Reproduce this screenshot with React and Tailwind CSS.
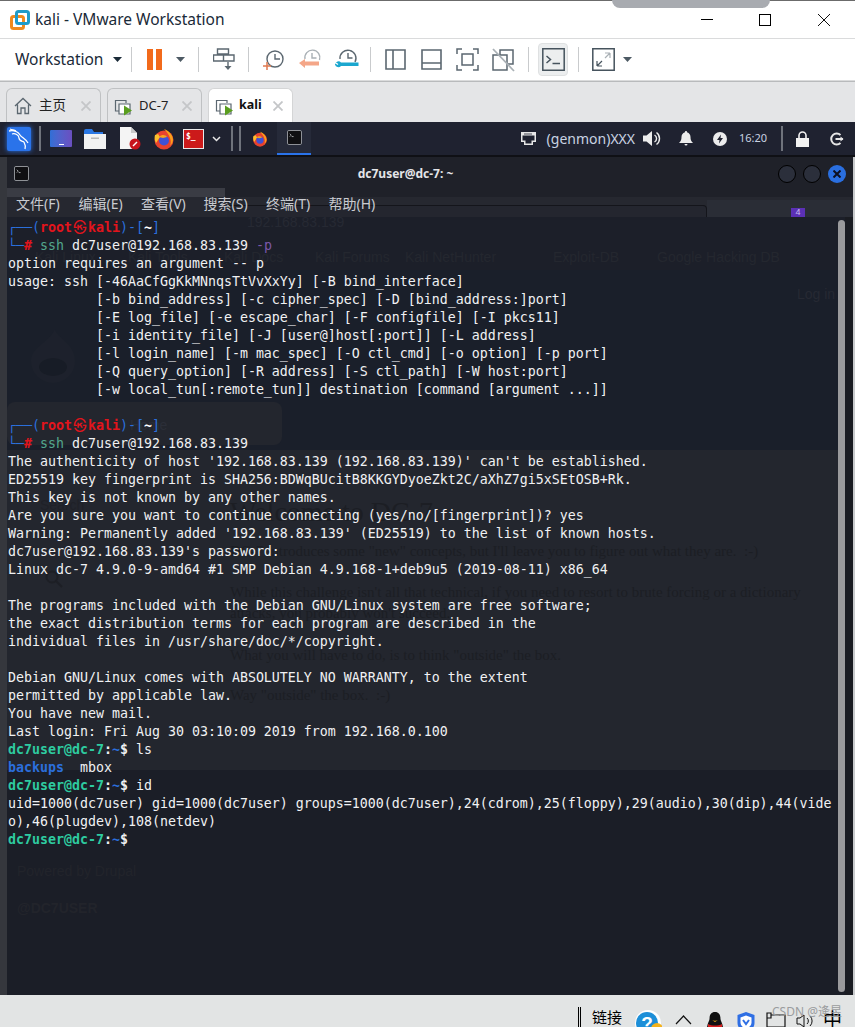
import React from 'react';

const UI_FONT = { fontFamily: '"Noto Sans", "Noto Sans CJK SC", sans-serif' };
const SANS = { fontFamily: '"Liberation Sans", sans-serif' };

const tabIcon = (
  <svg width="20" height="20" viewBox="0 0 20 20" fill="none">
    <path d="M5 15H1.5V4.5H12V7" stroke="#5b6770" strokeWidth="1.2" />
    <path d="M5 15V8H16V18H5z" stroke="#5b6770" strokeWidth="1.2" fill="#fff" />
    <path d="M10 9.5l8 5-8 5z" fill="#5a9e1f" />
  </svg>
);

const Sep = ({ ml = 0 }) => <div className="w-px h-[25px] bg-[#c9cbcd]" style={{ marginLeft: ml }} />;

const Caret = ({ color = '#4d5a64', size = 9 }) => (
  <svg width={size} height="5" viewBox="0 0 9 5"><path d="M0 0h9L4.5 5z" fill={color} /></svg>
);

const ClockIcon = ({ children }) => (
  <svg width="26" height="24" viewBox="0 0 26 24" fill="none">
    <circle cx="14" cy="11" r="8" stroke="#5b6770" strokeWidth="1.4" fill="#fff" />
    <path d="M14 6v5h5" stroke="#5b6770" strokeWidth="1.4" />
    {children}
  </svg>
);

const Toolbar = () => (
  <div className="h-[43px] border-y border-y-[#dadbdc] bg-white flex items-center shrink-0">
    <span className="ml-[15px] text-[15.5px] text-[#1a2a38] w-[90px]">Workstation</span>
    <span className="ml-[8px]"><Caret color="#1a2a38" size={9} /></span>
    <Sep ml={9} />
    <div className="ml-[15px] flex gap-[3px]">
      <div className="w-[6px] h-[21px] bg-[#f26a1b]" />
      <div className="w-[6px] h-[21px] bg-[#f26a1b]" />
    </div>
    <span className="ml-[14px]"><Caret size={9} /></span>
    <Sep ml={13} />
    <div className="ml-[14px]">
      <svg width="22" height="23" viewBox="0 0 22 23" fill="none" stroke="#5b6770" strokeWidth="1.4">
        <path d="M4.5 1h11v5h-11zM.5 7h10v6H.5zM10.5 7h10.500v6h-10.500z" />
        <path d="M15 14v5" />
        <path d="M11.500 18h7L15 22z" fill="#5b6770" stroke="none" />
      </svg>
    </div>
    <Sep ml={13} />
    <div className="ml-[12px]">
      <ClockIcon><path d="M2 18h8M6 14v8" stroke="#e07a50" strokeWidth="1.5" /></ClockIcon>
    </div>
    <div className="ml-[11px]">
      <svg width="26" height="24" viewBox="0 0 26 24" fill="none">
        <path d="M7 11a7.500 7.500 0 1 1 14.500 1" stroke="#a9b0b5" strokeWidth="1.4" />
        <path d="M14 5v5h4.500" stroke="#a9b0b5" strokeWidth="1.4" />
        <path d="M1 15l6-4v2.500h14v4H7V20z" fill="#f4a688" />
      </svg>
    </div>
    <div className="ml-[10px]">
      <svg width="26" height="24" viewBox="0 0 26 24" fill="none">
        <path d="M6 11a8 8 0 1 1 15 3" stroke="#5b6770" strokeWidth="1.4" />
        <path d="M14 5v5h4.500" stroke="#5b6770" strokeWidth="1.4" />
        <path d="M1 16a3.500 3.500 0 0 1 6-1.500h17.500v3.500H7A3.500 3.500 0 0 1 1 16.500z" fill="#1ba7cf" />
        <path d="M1 14.500l3 2" stroke="#fff" strokeWidth="1.400" />
      </svg>
    </div>
    <Sep ml={10} />
    <div className="ml-[14px]">
      <svg width="21" height="21" viewBox="0 0 21 21" fill="none" stroke="#5b6770" strokeWidth="1.6">
        <path d="M1 1h19v19H1zM8 1v19" />
      </svg>
    </div>
    <div className="ml-[15px]">
      <svg width="21" height="21" viewBox="0 0 21 21" fill="none" stroke="#5b6770" strokeWidth="1.6">
        <path d="M1 1h19v19H1zM1 14h19" />
      </svg>
    </div>
    <div className="ml-[14px]">
      <svg width="23" height="23" viewBox="0 0 23 23" fill="none" stroke="#5b6770" strokeWidth="1.5">
        <path d="M1 6V1h5M17 1h5v5M22 17v5h-5M6 22H1v-5M6 6h11v11H6z" />
      </svg>
    </div>
    <div className="ml-[13px]">
      <svg width="23" height="24" viewBox="0 0 23 24" fill="none" stroke="#5b6770" strokeWidth="1.5">
        <path d="M1 7h14v15H1zM8 7V2h13v14h-6" />
        <path d="M1 1l21 22" stroke="#a9b0b5" strokeWidth="1.800" />
      </svg>
    </div>
    <Sep ml={13} />
    <div className="ml-[9px] w-[30px] h-[33px] rounded-[4px] bg-[#eceeef] border border-[#dfe1e2] flex items-center justify-center">
      <svg width="23" height="23" viewBox="0 0 23 23" fill="none" stroke="#46535d" strokeWidth="1.500">
        <path d="M.8.8h21.400v21.400H.8z" />
        <path d="M4.500 8l4 3.500-4 3.500M10.500 15.500H18" />
      </svg>
    </div>
    <Sep ml={10} />
    <div className="ml-[13px]">
      <svg width="23" height="23" viewBox="0 0 23 23" fill="none">
        <path d="M.8.8h21.400v21.400H.8z" stroke="#46535d" strokeWidth="1.500" />
        <path d="M5 18l5-5M5 18v-5M5 18h5" stroke="#46535d" strokeWidth="1.200" />
        <path d="M18 5l-5 5M18 5v5M18 5h-5" stroke="#a9b0b5" strokeWidth="1.200" />
      </svg>
    </div>
    <span className="ml-[8px]"><Caret size={9} /></span>
  </div>
);

const Tab = ({ width, active, icon, children }) => (
  <div
    className={`h-[34px] rounded-t-[6px] border border-b-0 flex items-center pl-[6px] ${active ? 'bg-white border-[#d4d5d6]' : 'bg-[#e4e5e7] border-[#bfc1c3]'}`}
    style={{ width }}
  >
    {icon}
    {children}
    <svg className="ml-auto mr-[9px]" width="10" height="10" viewBox="0 0 10 10" stroke="#c4c6c8" strokeWidth="1.800">
      <path d="M.5.5l9 9M9.500.5l-9 9" />
    </svg>
  </div>
);

const Firefox = ({ size }) => (
  <svg width={size} height={size} viewBox="0 0 22 22">
    <circle cx="11" cy="12" r="9.500" fill="#e8422e" />
    <path d="M11 1c5 2 9 6 9 11a8 8 0 0 1-3 6c2-5 0-11-6-17z" fill="#f9a11b" />
    <path d="M2 7c-1 3 0 6 1 8l4-6-2-3z" fill="#fbc02d" />
    <circle cx="11" cy="12.500" r="5" fill="#3f51d6" />
    <path d="M6 9c3-3 7-2 8 0l-4 1z" fill="#f9a11b" />
  </svg>
);

const MiniTerm = ({ size }) => (
  <svg width={size} height={size} viewBox="0 0 16 16">
    <rect x=".5" y=".5" width="15" height="15" rx="1.500" fill="#0f0f12" stroke="#9b9ea3" />
    <path d="M3 4l1.500 1.500L3 7" stroke="#cfd1d4" strokeWidth=".8" fill="none" />
    <path d="M5 7h2" stroke="#cfd1d4" strokeWidth=".8" />
  </svg>
);

const PanelSep = ({ ml = 0 }) => <div className="w-[2px] h-[25px] bg-[#6f737c]" style={{ marginLeft: ml }} />;

const KaliPanel = () => (
  <div className="h-[33px] bg-[#1f2230] flex items-center shrink-0 text-[#d6dce6]">
    <div className="ml-[7px] w-[24px] h-[24px] rounded-[2px] bg-[#2a73ea] shadow-[0_0_5px_#2a73ea] flex items-center justify-center">
      <svg width="22" height="22" viewBox="0 0 22 22" fill="none" stroke="#fff" strokeWidth="1.300">
        <path d="M1 3c5-1 9 1 11 4 2 3 5 3 8 8M4 6c3-1 7 1 7 4 0 3 3 3 5 4M16 14c1 2 2 4 1 7" />
        <path d="M2 1c2 1 4 1 6 2" />
      </svg>
    </div>
    <PanelSep ml={8} />
    <div className="ml-[9px] w-[22px] h-[17px] rounded-[1px] bg-gradient-to-r from-[#2f6fd6] to-[#6a4fc0] flex items-end justify-center">
      <span className="w-[5px] h-px bg-white mb-[2px]" />
    </div>
    <div className="ml-[12px]">
      <svg width="22" height="20" viewBox="0 0 22 20">
        <path d="M0 2a2 2 0 0 1 2-2h6l2 3h9v2H0z" fill="#2b78e4" />
        <path d="M0 5h22v15H0z" fill="#f2f2f2" />
        <path d="M7 8.500h8v1.500H7z" fill="#b9b9b9" />
      </svg>
    </div>
    <div className="ml-[14px]">
      <svg width="21" height="23" viewBox="0 0 21 23">
        <path d="M0 0h11l6 6v16H0z" fill="#f4f4f4" />
        <path d="M11 0l6 6h-6z" fill="#c9c9c9" />
        <circle cx="15" cy="17" r="5.500" fill="#c8141c" />
        <path d="M13 19l4-4" stroke="#fff" strokeWidth="1.500" />
      </svg>
    </div>
    <div className="ml-[12px]"><Firefox size={22} /></div>
    <div className="ml-[8px] w-[21px] h-[20px] bg-[#cc1a1a] border border-[#e9e9e9] text-white text-[8px] leading-[13px] font-bold pl-[2px]" style={{ fontFamily: '"DejaVu Sans Mono", monospace' }}>$_</div>
    <svg className="ml-[8px]" width="9" height="6" viewBox="0 0 9 6" fill="none" stroke="#e8e8e8" strokeWidth="1.500"><path d="M1 1l3.500 3.500L8 1" /></svg>
    <PanelSep ml={10} />
    <PanelSep ml={6} />
    <div className="ml-[11px]"><Firefox size={16} /></div>
    <div className="ml-[9px] w-[34px] h-[33px] bg-[#262a39] border-b-[2px] border-b-[#2a73ea] flex items-center justify-center pb-px">
      <MiniTerm size={15} />
    </div>
    <div className="ml-auto flex items-center">
      <svg width="15" height="13" viewBox="0 0 15 13">
        <path d="M0 0h15v10h-3v3H3v-3H0z" fill="#e6e6e6" />
        <path d="M1.500 3.500h12v5h-3v3h-6v-3h-3z" fill="#1f2230" />
        <path d="M4 1v2M6 1v2M8 1v2M10 1v2" stroke="#1f2230" strokeWidth=".8" />
      </svg>
      <span className="ml-[11px] text-[14px] leading-none text-[#c9d3e2]" style={UI_FONT}>(genmon)XXX</span>
      <svg className="ml-[8px]" width="18" height="17" viewBox="0 0 18 17">
        <path d="M0 5.500h3.500L9 1v15L3.500 11.500H0z" fill="#ececec" />
        <path d="M11.500 5a4 4 0 0 1 0 7M13.500 2.500a7.500 7.500 0 0 1 0 12" stroke="#ececec" strokeWidth="1.400" fill="none" />
      </svg>
      <svg className="ml-[18px]" width="14" height="15" viewBox="0 0 14 15">
        <path d="M7 0a1 1 0 0 1 1 1.200C10.500 2 11.500 4 11.500 6c0 3 .8 4.500 2.500 6H0c1.700-1.500 2.500-3 2.500-6C2.500 4 3.500 2 6 1.200A1 1 0 0 1 7 0zM5.500 13h3a1.500 1.500 0 0 1-3 0z" fill="#ececec" />
      </svg>
      <svg className="ml-[20px]" width="14" height="14" viewBox="0 0 14 14">
        <circle cx="7" cy="7" r="7" fill="#ececec" />
        <path d="M8 2.500L4 8h2.500L6 11.500 10 6H7.500z" fill="#1f2230" />
      </svg>
      <span className="ml-[12px] w-[28px] text-[11px] text-[#c9d3e2]" style={UI_FONT}>16:20</span>
      <PanelSep ml={14} />
      <svg className="ml-[13px]" width="13" height="16" viewBox="0 0 13 16">
        <path d="M0 7h13v9H0z" fill="#f2f2f2" />
        <path d="M3 7V4.500a3.500 3.500 0 0 1 7 0V7" stroke="#f2f2f2" strokeWidth="1.600" fill="none" />
      </svg>
      <svg className="ml-[21px] mr-[11px]" width="14" height="14" viewBox="0 0 14 14" fill="none" stroke="#e6e6e6" strokeWidth="2">
        <path d="M10.500 3a5.500 5.500 0 1 0 0 8" />
        <path d="M5.500 7H13" />
        <path d="M10.500 4.500L13.500 7l-3 2.500z" fill="#e6e6e6" stroke="none" />
      </svg>
    </div>
  </div>
);

const GHOST_LINKS = [
  ['Kali Linux', 28], ['Kali Tools', 121], ['Kali Docs', 217], ['Kali Forums', 308],
  ['Kali NetHunter', 398], ['Exploit-DB', 546], ['Google Hacking DB', 650],
];

const GHOST_TEXT = [
  ['DC-7 introduces some "new" concepts, but I\'ll leave you to figure out what they are.  :-)', 223, 384],
  ['While this challenge isn\'t all that technical, if you need to resort to brute forcing or a dictionary', 223, 425],
  ['attacks, you probably won\'t succeed.', 223, 446],
  ['What you will have to do, is to think "outside" the box.', 223, 488],
  ['Way "outside" the box.  :-)', 223, 528],
];

// see-through browser window behind the terminal, positions are the picture's
const GhostBrowser = () => (
  <div className="absolute inset-0 flex flex-col overflow-hidden">
    <div className="h-[40px] bg-[#1f2129] shrink-0" />
    <div className="h-[20px] bg-[#262830] shrink-0" />
    <div className="h-[53px] bg-[#1c1f29] shrink-0" />
    <div className="h-[180px] bg-[#1a1f2a] shrink-0" />
    <div className="h-[320px] bg-[#23262e] shrink-0" />
    <div className="flex-1 bg-[#1b1e27]" />

    <div className="absolute left-0 top-[31px] w-[218px] h-[9px] bg-[#3a3c44]" />
    <div className="absolute left-[700px] top-[43px] w-[146px] h-[17px] bg-[#2a2d36]" />
    <div className="absolute left-[220px] top-[48px] w-[480px] h-[12px] rounded-tr-[4px] bg-[#24262f] border-t border-r border-[#14151b]" />
    <div className="absolute left-[784px] top-[51px] w-[14px] h-[9px] bg-[#5b30b5] text-[9px] leading-[9px] text-center text-[#c9bdf0]" style={SANS}>4</div>
    <span className="absolute left-[240px] top-[55px] text-[14px] leading-5 text-[#262933]" style={SANS}>192.168.83.139</span>
    {GHOST_LINKS.map(([label, left]) => (
      <span key={label} className="absolute top-[90px] text-[14px] leading-5 text-[#24272f] whitespace-nowrap" style={{ left, ...SANS }}>{label}</span>
    ))}
    <span className="absolute left-[790px] top-[127px] text-[14px] leading-5 text-[#262933]" style={SANS}>Log in</span>

    <div className="absolute left-[16px] top-[170px] w-[60px] h-[60px] opacity-50">
      <svg width="60" height="60" viewBox="0 0 60 60">
        <path d="M32 2c1 9 20 14 20 32a22 22 0 0 1-44 0C8 20 26 16 32 2z" fill="#20242e" />
        <ellipse cx="30" cy="40" rx="14" ry="9" fill="#161a23" />
      </svg>
    </div>
    <div className="absolute left-0 top-[245px] w-[275px] h-[43px] rounded-[8px] bg-[#23262e]" />
    <span className="absolute left-[123px] top-[258px] text-[14px] leading-5 text-[#2b2e38]" style={SANS}>Home</span>
    <span className="absolute left-[33px] top-[338px] text-[14px] leading-5 text-[#1f2128]" style={SANS}>Search</span>
    <svg className="absolute left-[38px] top-[413px]" width="18" height="18" viewBox="0 0 18 18" fill="none" stroke="#1d1f25" strokeWidth="2">
      <circle cx="7" cy="7" r="5.500" /><path d="M11 11l6 6" />
    </svg>
    <span className="absolute left-[223px] top-[333px] text-[28px] leading-[44px] text-[#1c1e24] whitespace-nowrap" style={{ fontFamily: '"Liberation Serif", serif' }}>Welcome to DC-7</span>
    {GHOST_TEXT.map(([text, left, top]) => (
      <span key={top} className="absolute text-[15px] leading-5 text-[#1c1e24] whitespace-pre" style={{ left, top, fontFamily: '"Liberation Serif", serif' }}>{text}</span>
    ))}
    <span className="absolute left-[10px] top-[704px] text-[14px] leading-5 text-[#22242b]" style={SANS}>Powered by Drupal</span>
    <span className="absolute left-[10px] top-[741px] text-[14px] leading-5 font-bold text-[#22242b]" style={SANS}>@DC7USER</span>
  </div>
);

const RootPrompt = ({ flag }) => (
  <>
    <div className="h-[18px]">
      <span className="text-[#2b6fdc]">┌──(</span>
      <span className="text-[#e3141c] font-bold">root</span>
      <span className="text-[#e3141c] inline-block w-[16px] text-center font-bold leading-none" style={{ fontFamily: '"Noto Sans CJK SC", sans-serif' }}>㉿</span>
      <span className="text-[#e3141c] font-bold">kali</span>
      <span className="text-[#2b6fdc]">)-[</span>
      <span className="text-white font-bold">~</span>
      <span className="text-[#2b6fdc]">]</span>
    </div>
    <div>
      <span className="text-[#2b6fdc]">└─</span>
      <span className="text-[#e3141c] font-bold">#</span>
      <span> </span>
      <span className="text-[#53a88e]">ssh</span>
      <span> dc7user@192.168.83.139</span>
      {flag && <span className="text-[#7b57a8]"> {flag}</span>}
    </div>
  </>
);

const UserPrompt = ({ cmd }) => (
  <div>
    <span className="text-[#2ecba0] font-bold">dc7user@dc-7</span>
    <span className="font-bold">:</span>
    <span className="text-[#2b6fdc] font-bold">~</span>
    <span className="font-bold">$</span>
    {cmd && <span> {cmd}</span>}
  </div>
);

const USAGE = `option requires an argument -- p
usage: ssh [-46AaCfGgKkMNnqsTtVvXxYy] [-B bind_interface]
           [-b bind_address] [-c cipher_spec] [-D [bind_address:]port]
           [-E log_file] [-e escape_char] [-F configfile] [-I pkcs11]
           [-i identity_file] [-J [user@]host[:port]] [-L address]
           [-l login_name] [-m mac_spec] [-O ctl_cmd] [-o option] [-p port]
           [-Q query_option] [-R address] [-S ctl_path] [-W host:port]
           [-w local_tun[:remote_tun]] destination [command [argument ...]]
 `;

const LOGIN = `The authenticity of host '192.168.83.139 (192.168.83.139)' can't be established.
ED25519 key fingerprint is SHA256:BDWqBUcitB8KKGYDyoeZkt2C/aXhZ7gi5xSEtOSB+Rk.
This key is not known by any other names.
Are you sure you want to continue connecting (yes/no/[fingerprint])? yes
Warning: Permanently added '192.168.83.139' (ED25519) to the list of known hosts.
dc7user@192.168.83.139's password: 
Linux dc-7 4.9.0-9-amd64 #1 SMP Debian 4.9.168-1+deb9u5 (2019-08-11) x86_64

The programs included with the Debian GNU/Linux system are free software;
the exact distribution terms for each program are described in the
individual files in /usr/share/doc/*/copyright.

Debian GNU/Linux comes with ABSOLUTELY NO WARRANTY, to the extent
permitted by applicable law.
You have new mail.
Last login: Fri Aug 30 03:10:09 2019 from 192.168.0.100`;

const MENUS = ['文件(F)', '编辑(E)', '查看(V)', '搜索(S)', '终端(T)', '帮助(H)'];

const Terminal = () => (
  <div className="relative w-[846px] h-full overflow-hidden">
    <GhostBrowser />
    <div className="relative flex flex-col h-full">
      <div className="h-[33px] shrink-0 flex items-center pl-[7px] pr-[7px] relative">
        <MiniTerm size={15} />
        <span className="flex-1 text-center text-[12px] font-bold text-[#e4e5e8] pl-[4px]" style={UI_FONT}>dc7user@dc-7: ~</span>
        <div className="flex gap-[7px]">
          <div className="w-[18px] h-[18px] rounded-full bg-[#2b2f3b] border border-black" />
          <div className="w-[18px] h-[18px] rounded-full bg-[#2b2f3b] border border-black" />
          <div className="w-[18px] h-[18px] rounded-full bg-[#2a6fe0] flex items-center justify-center">
            <svg width="8" height="8" viewBox="0 0 8 8" stroke="#0d1020" strokeWidth="2"><path d="M.5.5l7 7M7.500.500l-7 7" /></svg>
          </div>
        </div>
      </div>
      <div className="h-[26px] shrink-0 flex items-center pl-[9px] gap-[12.5px] text-[14px] text-[#c9cbd0]" style={UI_FONT}>
        {MENUS.map((m) => <span key={m} className="w-[50px] whitespace-nowrap">{m}</span>)}
      </div>
      <div
        className="flex-1 pl-px pt-[3px] text-[13.29px] leading-[18px] text-[#f0f1f3] whitespace-pre"
        style={{ fontFamily: '"DejaVu Sans Mono", "Noto Sans CJK SC", monospace' }}
      >
        <RootPrompt flag="-p" />
        <div>{USAGE}</div>
        <RootPrompt />
        <div>{LOGIN}</div>
        <UserPrompt cmd="ls" />
        <div><span className="text-[#2b6fdc] font-bold">backups</span>  mbox</div>
        <UserPrompt cmd="id" />
        <div>uid=1000(dc7user) gid=1000(dc7user) groups=1000(dc7user),24(cdrom),25(floppy),29(audio),30(dip),44(vide</div>
        <div>o),46(plugdev),108(netdev)</div>
        <UserPrompt />
      </div>
    </div>
    <div className="absolute top-[63px] bottom-[3px] right-[8px] w-[7px] rounded-full bg-[#9a9a9c]" />
    <div className="absolute top-[60px] bottom-0 right-0 w-[8px] bg-[#1a1c22]" />
  </div>
);

const WinTaskbar = () => (
  <div className="relative h-[32px] bg-[#e2e4e4] shrink-0 flex items-start overflow-hidden" style={UI_FONT}>
    <div className="ml-[578px] mt-[12px] w-[3px] h-[20px] border-x border-black" />
    <span className="ml-[11px] mt-[12px] text-[15px] leading-5 text-black whitespace-nowrap">链接</span>
    <svg className="ml-[12px] mt-[14px]" width="28" height="28" viewBox="0 0 28 28">
      <circle cx="14" cy="14" r="13" fill="#fff" />
      <circle cx="13" cy="14" r="11" fill="#1d8fd8" />
      <text x="13" y="21" textAnchor="middle" fontSize="19" fontWeight="700" fill="#fff" fontFamily="Liberation Sans">?</text>
      <circle cx="23" cy="20" r="6" fill="#f5b21b" />
    </svg>
    <svg className="ml-[13px] mt-[20px]" width="17" height="10" viewBox="0 0 17 10" fill="none" stroke="#111" strokeWidth="1.200">
      <path d="M1 9l7.500-8L16 9" />
    </svg>
    <svg className="ml-[14px] mt-[17px]" width="18" height="26" viewBox="0 0 18 26">
      <path d="M9 0c4 0 5.500 3 5.500 7 0 2 2.500 5 2.500 9s-3 8-8 8-8-4-8-8 2.500-7 2.500-9C3.500 3 5 0 9 0z" fill="#111" />
      <path d="M5 14c-1 5 1 10 4 10s5-5 4-10z" fill="#fff" />
      <path d="M2 12c4 2 10 2 14 0v3H2z" fill="#d6201f" />
      <path d="M6 8c1 1 5 1 6 0l-3 2z" fill="#f5b21b" />
    </svg>
    <svg className="ml-[12px] mt-[16px]" width="20" height="22" viewBox="0 0 20 22" fill="none">
      <path d="M10 1l8.500 3v8c0 5-4 8-8.500 10C5.500 20 1.500 17 1.500 12V4z" fill="#2f6fe4" />
      <path d="M10 4.500l5.500 2v5c0 3-2.500 5-5.500 6.500-3-1.500-5.500-3.500-5.500-6.500v-5z" fill="#fff" />
      <path d="M7 9l3 4 3-4" stroke="#2f6fe4" strokeWidth="2" />
    </svg>
    <svg className="ml-[10px] mt-[17px]" width="20" height="21" viewBox="0 0 20 21" fill="none" stroke="#111" strokeWidth="1.200">
      <path d="M1 1h4v5H1zM5 3h14v12H1V6M10 15v6" />
    </svg>
    <svg className="ml-[10px] mt-[19px]" width="19" height="14" viewBox="0 0 19 14" fill="none" stroke="#111" strokeWidth="1">
      <path d="M1 4h3l4-3v12l-4-3H1zM11 4a4 4 0 0 1 0 6M14 2a7 7 0 0 1 0 10" />
    </svg>
    <span className="ml-[8px] mt-[13px] text-[19px] leading-6 text-black">中</span>
    <span className="absolute left-[772px] top-[9px] text-[12px] leading-4 text-[#9a9c9e] whitespace-nowrap">CSDN @逄昱</span>
  </div>
);

const App = () => (
  <div className="w-[855px] h-[1027px] overflow-hidden flex flex-col bg-white" style={UI_FONT}>
    <div className="h-px bg-[#6b6b6b] shrink-0" />
    <div className="relative h-[37px] bg-white flex items-center shrink-0">
      <svg className="ml-[10px]" width="20" height="20" viewBox="0 0 20 20" fill="none">
        <rect x="1.500" y="6.500" width="12" height="12" rx="2" stroke="#f08a1d" strokeWidth="3" />
        <rect x="6.500" y="1.500" width="12" height="12" rx="2" stroke="#1f9bc9" strokeWidth="3" />
      </svg>
      <span className="ml-[5px] text-[15.500px] text-[#1a2a38] whitespace-nowrap">kali - VMware Workstation</span>
      <div className="absolute left-[612px] top-[-1px] w-[158px] h-[8px] rounded-b-[8px] bg-[#a8abb0]" />
      <div className="ml-auto flex items-center">
        <div className="w-[12px] h-px bg-black" />
        <div className="ml-[46px] w-[12px] h-[12px] border border-black" />
        <svg className="ml-[47px] mr-[25px]" width="12" height="12" viewBox="0 0 12 12" stroke="#111" strokeWidth="1">
          <path d="M0 0l12 12M12 0L0 12" />
        </svg>
      </div>
    </div>
    <Toolbar />
    <div className="h-[41px] bg-[#e4e5e7] flex items-end gap-[6px] pl-[6px] shrink-0 border-t border-t-[#b8babc]">
      <Tab width={95} icon={(
        <svg className="ml-[1px]" width="18" height="18" viewBox="0 0 18 18" fill="none" stroke="#5b6770" strokeWidth="1.300">
          <path d="M1 9l8-7.500L17 9M3.500 7.500V16.500H7V11h4v5.500h3.500V7.500" />
        </svg>
      )}>
        <span className="ml-[7px] text-[13.500px] text-[#222]">主页</span>
      </Tab>
      <Tab width={95} icon={tabIcon}>
        <span className="ml-[5px] text-[13px] text-[#222]">DC-7</span>
      </Tab>
      <Tab width={85} active icon={tabIcon}>
        <span className="ml-[4px] text-[12.500px] font-bold text-[#111]">kali</span>
      </Tab>
    </div>
    <KaliPanel />
    <div className="h-[2px] bg-[#0f1015] shrink-0" />
    <div className="flex-1 min-h-0 flex bg-[#2a2c33]">
      <div className="w-[7px] shrink-0 bg-[#35373d]" />
      <Terminal />
      <div className="flex-1 bg-[#c9cbcd]" />
    </div>
    <WinTaskbar />
  </div>
);

export default App;
